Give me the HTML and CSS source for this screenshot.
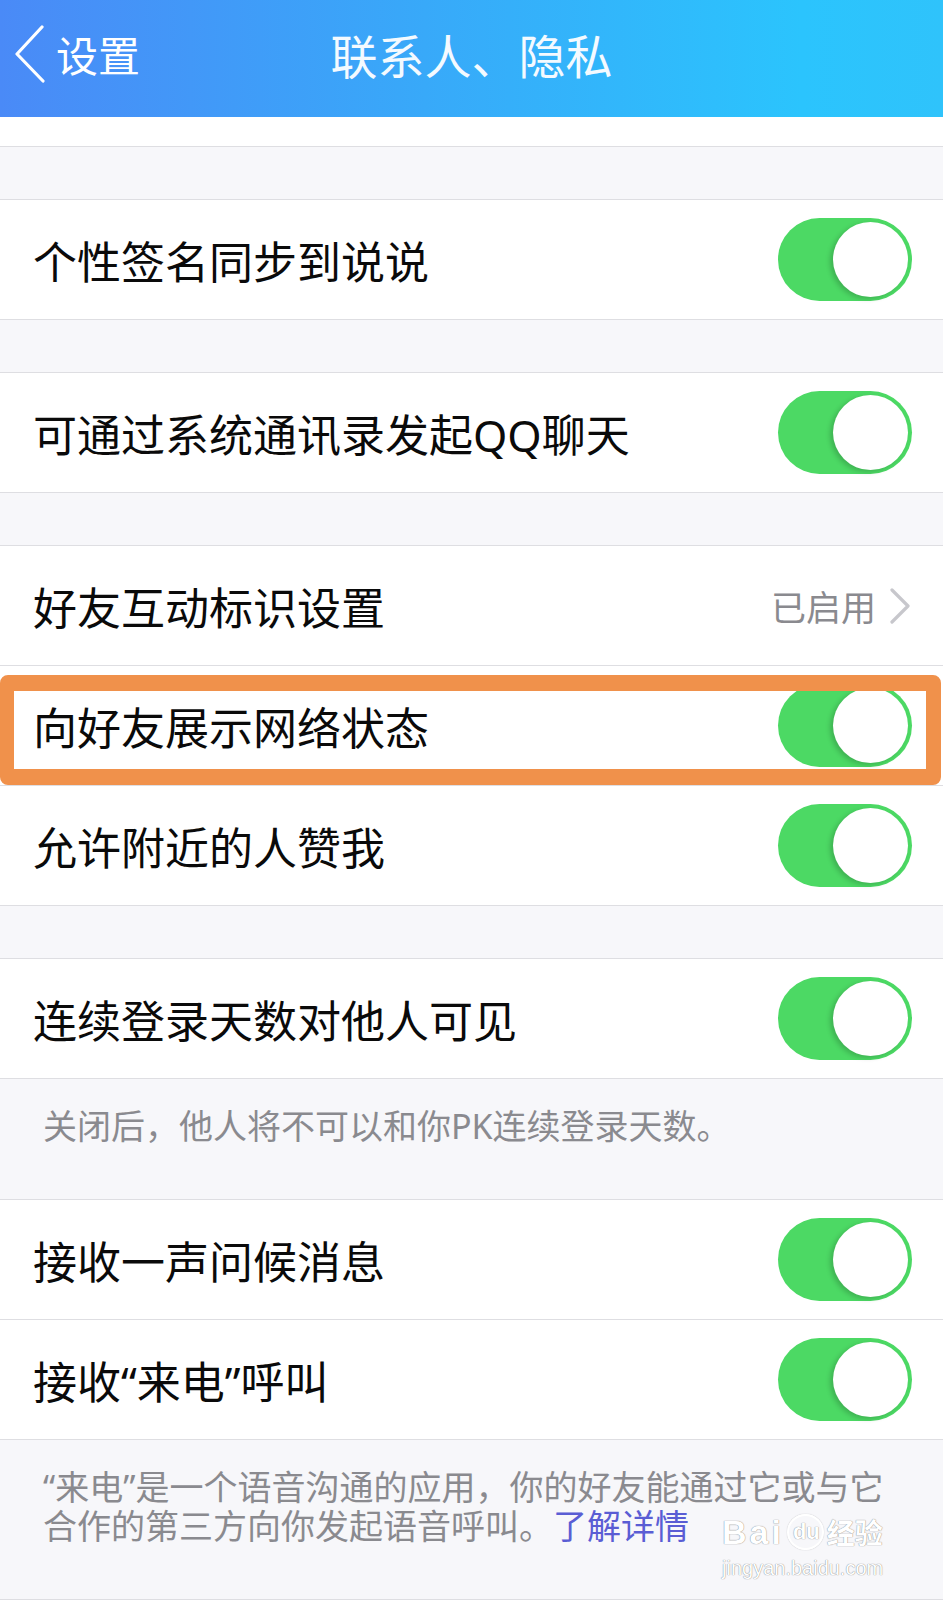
FILE: index.html
```html
<!DOCTYPE html>
<html lang="zh-CN">
<head>
    <meta charset="UTF-8">
    <meta name="viewport" content="width=device-width, initial-scale=1.0">
    <title>联系人、隐私</title>
    <link rel="stylesheet" href="styles.css">
</head>
<body>
    <header class="navbar">
        <div class="nav-back">
            <svg class="back-arrow" width="32" height="58" viewBox="0 0 32 58">
                <polyline points="27,2 2,29 28,56" />
            </svg>
            <span>设置</span>
        </div>
        <h1 class="nav-title">联系人、隐私</h1>
        <div></div>
    </header>

    <div class="top-strip"></div>
    <div class="gap"></div>

    <section class="group">
        <div class="row">
            <span class="label">个性签名同步到说说</span>
            <span class="switch"></span>
        </div>
    </section>

    <div class="gap"></div>

    <section class="group">
        <div class="row">
            <span class="label">可通过系统通讯录发起QQ聊天</span>
            <span class="switch"></span>
        </div>
    </section>

    <div class="gap"></div>

    <section class="group">
        <div class="row">
            <span class="label">好友互动标识设置</span>
            <span class="detail">
                已启用
                <svg class="chevron" width="22" height="36" viewBox="0 0 22 36">
                    <polyline points="3,2 19,18 3,34" />
                </svg>
            </span>
        </div>
        <div class="row highlighted">
            <span class="label">向好友展示网络状态</span>
            <span class="switch"></span>
            <div class="highlight-box"></div>
        </div>
        <div class="row">
            <span class="label">允许附近的人赞我</span>
            <span class="switch"></span>
        </div>
    </section>

    <div class="gap"></div>

    <section class="group">
        <div class="row">
            <span class="label">连续登录天数对他人可见</span>
            <span class="switch"></span>
        </div>
    </section>

    <div class="footer-note">关闭后，他人将不可以和你PK连续登录天数。</div>

    <section class="group">
        <div class="row">
            <span class="label">接收一声问候消息</span>
            <span class="switch"></span>
        </div>
        <div class="row">
            <span class="label">接收“来电”呼叫</span>
            <span class="switch"></span>
        </div>
    </section>

    <div class="footer-note last">
        <p class="note-text">“来电”是一个语音沟通的应用，你的好友能通过它或与它<br>合作的第三方向你发起语音呼叫。<a href="#" class="link">了解详情</a></p>
        <div class="watermark">
            <div class="wm-logo"><span>Bai</span><span class="wm-paw">du</span><span class="wm-cn">经验</span></div>
            <div class="wm-url">jingyan.baidu.com</div>
        </div>
    </div>
</body>
</html>
```

FILE: styles.css
```css
body {
    margin: 0;
    background-color: #f7f7fa;
    font-family: "Noto Sans", "Noto Sans CJK SC", sans-serif;
    color: #0a0a0a;
}

.navbar {
    display: grid;
    grid-template-columns: 1fr auto 1fr;
    align-items: center;
    height: 117px;
    box-sizing: border-box;
    padding-bottom: 10px;
    background: linear-gradient(90deg, #4a8af7 0%, #38a9f9 45%, #2bc4fd 85%, #2fc3fb 100%);
    color: #fff;
}

.nav-back {
    display: flex;
    align-items: center;
    gap: 9px;
    padding-left: 15px;
    font-size: 42px;
    font-family: "Noto Sans CJK SC", sans-serif;
}

.back-arrow polyline {
    fill: none;
    stroke: #fff;
    stroke-width: 3.2;
    stroke-linecap: round;
    stroke-linejoin: round;
}

.nav-title {
    margin: 0;
    font-size: 47px;
    font-weight: normal;
    font-family: "Noto Sans CJK SC", sans-serif;
    color: #f4faff;
}

.top-strip {
    height: 29px;
    background-color: #fff;
    border-bottom: 1px solid #dedee2;
}

.gap {
    height: 52px;
}

.group {
    background-color: #fff;
    border-top: 1px solid #dedee2;
    border-bottom: 1px solid #dedee2;
}

.row {
    display: flex;
    align-items: center;
    justify-content: space-between;
    height: 119px;
    padding: 0 31px 0 33px;
    font-size: 44px;
}

.row + .row {
    border-top: 1px solid #dedee2;
}

.switch {
    position: relative;
    flex-shrink: 0;
    width: 134px;
    height: 83px;
    border-radius: 42px;
    background-color: #4cd964;
}

.switch::after {
    content: "";
    position: absolute;
    top: 4px;
    right: 4px;
    width: 75px;
    height: 75px;
    border-radius: 50%;
    background-color: #fff;
    box-shadow: -3px 2px 5px rgba(0, 0, 0, 0.18);
}

.detail {
    display: flex;
    align-items: center;
    gap: 13px;
    margin-right: 1px;
    font-size: 35px;
    color: #8a8a8f;
}

.chevron polyline {
    fill: none;
    stroke: #c7c7cc;
    stroke-width: 3.2;
    stroke-linecap: round;
    stroke-linejoin: round;
}

.highlighted {
    position: relative;
}

.highlight-box {
    position: absolute;
    top: 9px;
    left: 0;
    right: 2px;
    height: 110px;
    box-sizing: border-box;
    border-style: solid;
    border-color: #f0914b;
    border-width: 16px 15px 16px 14px;
    border-radius: 8px;
}

.footer-note {
    height: 120px;
    box-sizing: border-box;
    padding: 28px 20px 0 43px;
    font-size: 34px;
    line-height: 39px;
    color: #8a8a8f;
}

.footer-note.last {
    position: relative;
    height: 160px;
    border-bottom: 1px solid #dedee2;
}

.note-text {
    margin: 0;
}

.link {
    color: #5a5dd4;
    text-decoration: none;
}

.watermark {
    position: absolute;
    left: 722px;
    top: 74px;
    color: #fff;
    font-family: "Liberation Sans", sans-serif;
    text-shadow: 0 0 1px rgba(0, 0, 0, 0.35), 0 0 1px rgba(0, 0, 0, 0.35);
    line-height: 1;
}

.wm-logo {
    display: flex;
    align-items: center;
    gap: 3px;
    font-size: 34px;
    letter-spacing: 3px;
    font-weight: bold;
}

.wm-paw {
    display: inline-block;
    padding: 5px 2px 5px 4px;
    font-size: 22px;
    letter-spacing: 0;
    border: 2px solid #fff;
    border-radius: 50%;
    box-shadow: 0 0 1px rgba(0, 0, 0, 0.35);
}

.wm-cn {
    font-family: "Noto Sans CJK SC", sans-serif;
    font-size: 28px;
    letter-spacing: 0;
}

.wm-url {
    margin-top: 8px;
    font-size: 20px;
    font-weight: normal;
}
```
